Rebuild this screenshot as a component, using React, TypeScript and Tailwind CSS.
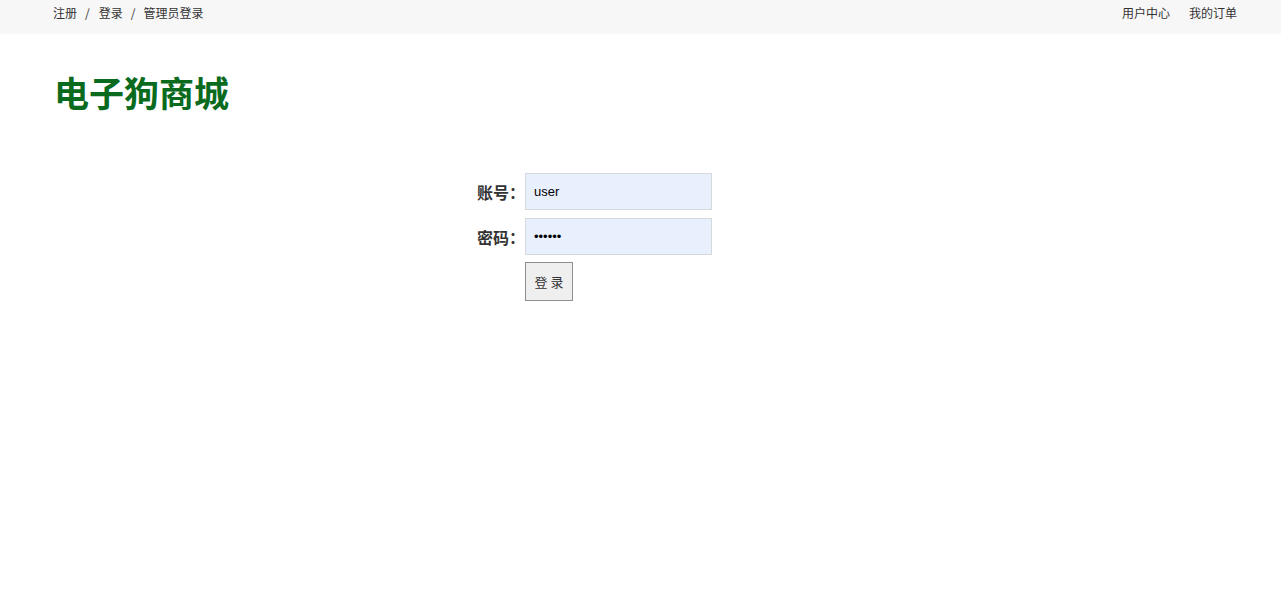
import { useState } from "react";

const font = { fontFamily: '"Microsoft YaHei", "Noto Sans CJK SC", sans-serif' };

export default function App() {
  const [account, setAccount] = useState("user");
  const [password, setPassword] = useState("123456");

  return (
    <div className="min-h-[605px] bg-white text-[#333]" style={font}>
      {/* top bar */}
      <div className="flex h-[34px] items-start justify-between bg-[#f7f7f7] pl-[53px] pr-[44px] pt-[5px] text-[12px] leading-[16px] text-[#333]">
        <div className="flex items-center">
          <a className="cursor-pointer">注册</a>
          <span className="ml-[8px] mr-[9px]">/</span>
          <a className="cursor-pointer">登录</a>
          <span className="ml-[8px] mr-[8px]">/</span>
          <a className="cursor-pointer">管理员登录</a>
        </div>
        <div className="flex items-center gap-[19px]">
          <a className="cursor-pointer">用户中心</a>
          <a className="cursor-pointer">我的订单</a>
        </div>
      </div>

      {/* logo */}
      <h1 className="ml-[54px] mt-[36px] text-[35px] font-bold leading-[44px] text-[#0a6b1e]">电子狗商城</h1>

      {/* login form */}
      <form
        className="ml-[477px] mt-[59px] flex flex-col gap-[8px]"
        onSubmit={(e) => e.preventDefault()}
      >
        <div className="flex items-center">
          <label className="w-[48px] text-[16px] font-bold text-[#333]">账号：</label>
          <input
            value={account}
            onChange={(e) => setAccount(e.target.value)}
            className="h-[37px] w-[187px] border border-[#d6d9dc] bg-[#e8f0fe] px-[8px] text-[13px] text-black outline-none"
            style={{ fontFamily: '"Liberation Sans", Arial, sans-serif' }}
          />
        </div>
        <div className="flex items-center">
          <label className="w-[48px] text-[16px] font-bold text-[#333]">密码：</label>
          <input
            type="password"
            value={password}
            onChange={(e) => setPassword(e.target.value)}
            className="h-[37px] w-[187px] border border-[#d6d9dc] bg-[#e8f0fe] px-[8px] text-[13px] text-black outline-none"
            style={{ fontFamily: '"Liberation Sans", Arial, sans-serif' }}
          />
        </div>
        <div className="-mt-px flex pl-[48px]">
          <button
            type="submit"
            className="h-[39px] w-[48px] border border-[#8f8f8f] bg-[#efefef] text-[13px] text-[#333]"
          >
            登 录
          </button>
        </div>
      </form>
    </div>
  );
}
